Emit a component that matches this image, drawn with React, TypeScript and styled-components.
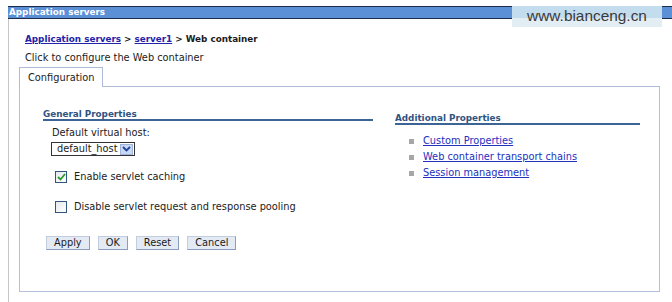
import React from 'react';
import styled, { createGlobalStyle } from 'styled-components';

const GlobalStyle = createGlobalStyle`
  html, body {
    margin: 0;
    padding: 0;
    background: #fff;
  }
  body {
    font-family: "DejaVu Sans", Verdana, sans-serif;
    font-size: 9.8px;
    color: #1b1b1b;
  }
`;

const Page = styled.div`
  position: relative;
  width: 672px;
  height: 302px;
  padding-top: 6px;
  box-sizing: border-box;
  overflow: hidden;
  display: flex;
  flex-direction: column;
`;

const TitleBar = styled.div`
  margin-left: 8px;
  height: 11px;
  padding-left: 1px;
  border-top: 1px solid #1e2d45;
  border-bottom: 1px solid #1e2d45;
  background: #5b8fd6;
  color: #fff;
  font-weight: bold;
  font-size: 8.8px;
  line-height: 11px;
  white-space: nowrap;
`;

const Watermark = styled.div`
  position: absolute;
  top: 6px;
  left: 512px;
  width: 150px;
  height: 21px;
  background: linear-gradient(#c3dcee 0, #c3dcee 57%, #e2edf4 57%, #e2edf4 100%);
  color: #3a3a3a;
  font-family: "Liberation Sans", Arial, sans-serif;
  font-size: 15.4px;
  line-height: 20px;
  text-align: center;
`;

const Body = styled.div`
  flex: 1;
  margin-left: 8px;
  padding: 0 12px 0 10px;
  border-left: 1px solid #c6c6c6;
  display: flex;
  flex-direction: column;
`;

const Breadcrumb = styled.div`
  margin: 13px 0 0 6px;
  line-height: 14px;
  font-weight: bold;
  font-size: 8.8px;
  white-space: nowrap;
`;

const CrumbLink = styled.a`
  color: #2424a8;
  text-decoration: underline;
`;

const Description = styled.div`
  margin: 5px 0 0 6px;
  line-height: 14px;
`;

const TabRow = styled.div`
  margin-top: 2px;
  display: flex;
  height: 20px;
`;

const Tab = styled.div`
  height: 19px;
  padding: 0 8px;
  border: 1px solid #aebbd8;
  border-bottom: none;
  line-height: 19px;
  background: #fff;
`;

const TabFiller = styled.div`
  flex: 1;
  height: 19px;
  border-bottom: 1px solid #aebbd8;
`;

const Panel = styled.div`
  height: 205px;
  box-sizing: border-box;
  border: 1px solid #b4c0da;
  border-top: none;
  padding-left: 23px;
  display: flex;
`;

const Column = styled.div<{ $width: number; $top: number; $gap?: number }>`
  width: ${p => p.$width}px;
  margin-left: ${p => p.$gap ?? 0}px;
  padding-top: ${p => p.$top}px;
  display: flex;
  flex-direction: column;
`;

const SectionTitle = styled.div`
  line-height: 10px;
  font-weight: bold;
  font-size: 8.8px;
  color: #2f5482;
  border-bottom: 2px solid #3c6595;
`;

const FieldLabel = styled.div`
  margin: 6px 0 0 9px;
  line-height: 12px;
`;

const Select = styled.div`
  margin: 3px 0 0 8px;
  width: 84px;
  height: 14px;
  box-sizing: border-box;
  border: 1px solid #333;
  display: flex;
  align-items: center;
  justify-content: space-between;
  padding: 0 1px 0 5px;
  background: #fff;
`;

const SelectValue = styled.span`
  line-height: 12px;
  height: 12px;
  padding-bottom: 1px;
  white-space: nowrap;
`;

const ArrowBox = styled.span`
  width: 13px;
  height: 11px;
  box-sizing: border-box;
  border: 1px solid #9fb4dc;
  background: #c8d8f3;
  display: flex;
  align-items: center;
  justify-content: center;
`;

const CheckRow = styled.label<{ $top: number }>`
  margin: ${p => p.$top}px 0 0 12px;
  display: flex;
  align-items: center;
  gap: 7px;
  line-height: 14px;
  height: 14px;
`;

const Box = styled.span`
  width: 12px;
  height: 12px;
  box-sizing: border-box;
  border: 1px solid #30557f;
  background: linear-gradient(135deg, #e4e8ee, #ffffff);
  display: flex;
  align-items: center;
  justify-content: center;
`;

const ButtonRow = styled.div`
  margin: 22px 0 0 3px;
  display: flex;
  gap: 8px;
`;

const Button = styled.button`
  height: 14px;
  padding: 0 7px;
  margin: 0;
  border: 1px solid;
  border-color: #c3cde0 #8b9dbd #8b9dbd #c3cde0;
  background: #e4eaf4;
  font-family: inherit;
  font-size: 9.8px;
  line-height: 12px;
  color: #1b1b1b;
`;

const LinkList = styled.ul`
  list-style: none;
  margin: 8px 0 0 14px;
  padding: 0;
`;

const LinkItem = styled.li`
  display: flex;
  align-items: center;
  gap: 9px;
  line-height: 16px;
`;

const Bullet = styled.span`
  width: 5px;
  height: 5px;
  background: #a6a6a6;
`;

const PropLink = styled.a`
  color: #2330c0;
  text-decoration: underline;
`;

const ChevronDown = () => (
  <svg width="9" height="6" viewBox="0 0 9 6">
    <path d="M1 1 L4.5 4.5 L8 1" fill="none" stroke="#22429e" strokeWidth="1.8" />
  </svg>
);

const Tick = () => (
  <svg width="9" height="8" viewBox="0 0 9 8">
    <path d="M1 4 L3.5 6.5 L8 1" fill="none" stroke="#2b9a2b" strokeWidth="1.8" />
  </svg>
);

const links = ['Custom Properties', 'Web container transport chains', 'Session management'];

const App = () => (
  <Page>
    <GlobalStyle />
    <TitleBar>Application servers</TitleBar>
    <Watermark>www.bianceng.cn</Watermark>
    <Body>
      <Breadcrumb>
        <CrumbLink>Application servers</CrumbLink> &gt; <CrumbLink>server1</CrumbLink> &gt; Web container
      </Breadcrumb>
      <Description>Click to configure the Web container</Description>
      <TabRow>
        <Tab>Configuration</Tab>
        <TabFiller />
      </TabRow>
      <Panel>
        <Column $width={330} $top={22}>
          <SectionTitle>General Properties</SectionTitle>
          <FieldLabel>Default virtual host:</FieldLabel>
          <Select>
            <SelectValue>default_host</SelectValue>
            <ArrowBox>
              <ChevronDown />
            </ArrowBox>
          </Select>
          <CheckRow $top={14}>
            <Box>
              <Tick />
            </Box>
            Enable servlet caching
          </CheckRow>
          <CheckRow $top={16}>
            <Box />
            Disable servlet request and response pooling
          </CheckRow>
          <ButtonRow>
            <Button>Apply</Button>
            <Button>OK</Button>
            <Button>Reset</Button>
            <Button>Cancel</Button>
          </ButtonRow>
        </Column>
        <Column $width={245} $top={26} $gap={22}>
          <SectionTitle>Additional Properties</SectionTitle>
          <LinkList>
            {links.map(l => (
              <LinkItem key={l}>
                <Bullet />
                <PropLink>{l}</PropLink>
              </LinkItem>
            ))}
          </LinkList>
        </Column>
      </Panel>
    </Body>
  </Page>
);

export default App;
